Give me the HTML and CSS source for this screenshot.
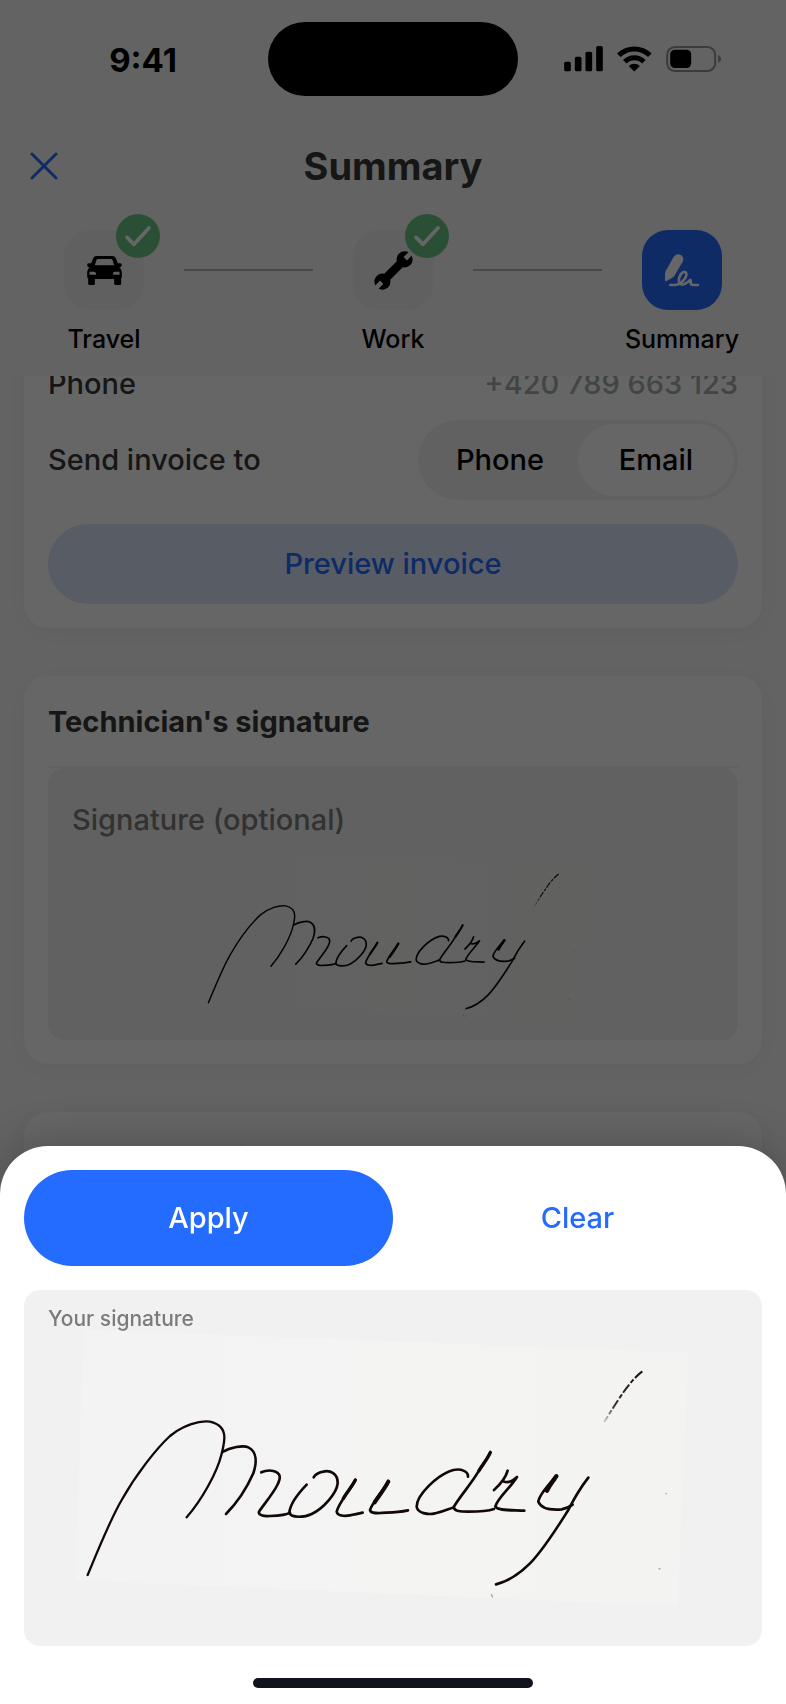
FILE: index.html
```html
<!DOCTYPE html>
<html lang="en">
<head>
<meta charset="utf-8">
<meta name="viewport" content="width=device-width, initial-scale=1">
<title>Summary</title>
<link rel="stylesheet" href="styles.css">
</head>
<body>
<svg class="defs" aria-hidden="true">
  <defs>
    <linearGradient id="paper" x1="0" y1="0" x2="1" y2="0">
      <stop offset="0" stop-color="#f3f3f3"/>
      <stop offset="0.5" stop-color="#f4f4f3"/>
      <stop offset="1" stop-color="#f3f3f1"/>
    </linearGradient>
    <linearGradient id="fade" gradientUnits="userSpaceOnUse" x1="1752" y1="122" x2="1632" y2="277">
      <stop offset="0" stop-color="#1b1210"/>
      <stop offset="0.7" stop-color="#3b3026"/>
      <stop offset="1" stop-color="#d8d4c4"/>
    </linearGradient>
    <symbol id="signature" viewBox="0 0 1920 840">
      <path fill="url(#paper)" d="M72 0 L1000 34 L1885 68 L1853 828 L960 790 L45 750Z"/>
      <g fill="none" stroke="#120907" stroke-width="8" stroke-linecap="round" stroke-linejoin="round">
        <path stroke-width="7" d="M83 735C110 670 150 570 185 510C230 430 290 355 330 318C370 285 420 270 450 275C480 282 494 300 493 325C492 345 488 360 484 375C470 430 425 510 380 562"/>
        <path d="M488 366C510 352 550 345 565 352C592 365 590 400 580 430C560 475 530 520 498 552"/>
        <path d="M604 427C615 422 632 421 640 423C665 430 662 445 652 465C640 490 610 525 597 545C594 555 610 560 630 558C660 557 680 555 690 548"/>
        <path d="M740 464C715 490 690 525 688 548C692 565 735 562 755 552C790 535 830 490 833 460C834 430 810 420 790 425C775 428 765 434 761 442"/>
        <path d="M886 450C870 480 835 520 830 545C832 560 860 560 885 553L908 548"/>
        <path stroke-width="10" d="M886 450C876 470 862 485 850 505"/>
        <path d="M985 453C965 490 935 520 930 540C932 552 955 550 980 548C1010 547 1025 545 1044 541"/>
        <path stroke-width="12" d="M985 455C972 480 955 500 944 517"/>
        <path d="M1224 440C1225 425 1205 415 1180 420C1130 435 1070 495 1070 530C1072 550 1105 555 1125 550C1150 545 1165 537 1178 533"/>
        <path d="M1291 366C1280 390 1262 410 1255 425C1235 460 1195 505 1182 530C1180 545 1205 545 1225 545C1260 545 1285 543 1302 537"/>
        <path stroke-width="10" d="M1291 368C1280 392 1264 408 1257 422"/>
        <path d="M1343 422C1338 440 1330 455 1302 480M1332 455C1350 460 1360 450 1371 441C1350 475 1312 505 1306 530C1312 542 1350 540 1393 542"/>
        <path d="M1490 437C1475 455 1438 490 1435 515C1445 540 1480 540 1505 538C1520 535 1530 530 1538 524"/>
        <path stroke-width="13" d="M1489 439C1478 454 1468 466 1461 482"/>
        <path d="M1585 443C1560 475 1540 510 1525 540C1490 595 1450 660 1410 700C1370 740 1340 755 1308 763"/>
        <path stroke="url(#fade)" stroke-width="6" stroke-linecap="butt" stroke-dasharray="30 6 14 7" d="M1747 124C1710 152 1680 200 1632 277"/>
        <path stroke="#a9a69c" stroke-width="4" d="M1294 794L1298 801M1818 490L1819 491M1797 716L1800 717"/>
      </g>
    </symbol>
    <symbol id="check" viewBox="0 0 132 132">
      <path fill="none" stroke="#fff" stroke-width="11" stroke-linecap="round" stroke-linejoin="round" d="M33 70L54 91L99 42"/>
    </symbol>
  </defs>
</svg>

<div class="screen">
  <header class="header">
    <div class="status">
      <span class="status-time">9:41</span>
      <span class="island"></span>
      <svg class="status-icons" viewBox="0 0 473 78" aria-hidden="true">
        <rect x="0" y="47" width="20" height="29" rx="5"/>
        <rect x="32" y="32" width="20" height="44" rx="5"/>
        <rect x="64" y="17" width="20" height="59" rx="5"/>
        <rect x="96" y="0" width="20" height="76" rx="5"/>
        <g fill="none" stroke="#000" stroke-width="15">
          <path d="M164 28A66 66 0 0 1 257 28"/>
          <path d="M182 47A40 40 0 0 1 239 47"/>
        </g>
        <path d="M194 60A23 23 0 0 1 227 60L213 74Q210 77 208 74Z"/>
        <rect x="309" y="3" width="144" height="72" rx="23" fill="none" stroke="#000" stroke-opacity=".4" stroke-width="6"/>
        <rect x="318" y="11" width="63" height="55" rx="14"/>
        <path fill-opacity=".4" d="M462 27Q471 31 471 39T462 51Z"/>
      </svg>
    </div>
    <div class="title-bar">
      <button class="close" type="button" aria-label="Close">
        <svg viewBox="0 0 28 28" aria-hidden="true"><path d="M2 2L26 26M26 2L2 26"/></svg>
      </button>
      <h1 class="title">Summary</h1>
    </div>
    <ol class="steps">
      <li class="step">
        <span class="tile">
          <svg class="icon-car" viewBox="0 0 104 87" aria-hidden="true">
            <path fill-rule="evenodd" d="M28 0H76Q83 0 86 7L92 22H100Q104 22 104 27Q104 33 99 34H96Q104 39 104 48V62Q104 65 102 67V83Q102 87 98 87H86Q81 87 81 83V69H23V83Q23 87 19 87H7Q3 87 3 83V67Q0 65 0 62V48Q0 39 8 34H5Q0 33 0 27Q0 22 4 22H12L18 7Q21 0 28 0ZM33 9Q29 9 28 12L23 28H81L76 12Q75 9 71 9ZM7 47V56H27Q27 47 20 47ZM97 47V56H77Q77 47 84 47Z"/>
          </svg>
          <svg class="badge" role="img" aria-label="Done"><use href="#check"/></svg>
        </span>
        <span class="step-label">Travel</span>
      </li>
      <li class="step-line" aria-hidden="true"></li>
      <li class="step">
        <span class="tile">
          <svg class="icon-wrench" viewBox="0 0 116 116" aria-hidden="true">
            <mask id="jaws">
              <rect width="116" height="116" fill="#fff"/>
              <path stroke="#000" stroke-width="14" stroke-linejoin="round" d="M-4 120L23 93M120 -4L93 23"/>
            </mask>
            <g mask="url(#jaws)">
              <circle cx="25" cy="91" r="24"/>
              <circle cx="91" cy="25" r="24"/>
              <path stroke="#000" stroke-width="25" d="M32 84L84 32"/>
            </g>
          </svg>
          <svg class="badge" role="img" aria-label="Done"><use href="#check"/></svg>
        </span>
        <span class="step-label">Work</span>
      </li>
      <li class="step-line" aria-hidden="true"></li>
      <li class="step" aria-current="step">
        <span class="tile tile-active">
          <svg class="icon-sign" viewBox="0 0 104 98" aria-hidden="true">
            <path fill="#fff" d="M26 8Q33 -3 45 2Q58 8 53 22L29 63Q25 70 18 73L5 80Q0 82 0 77V59Q0 54 3 49Z"/>
            <path fill="none" stroke="#fff" stroke-width="8" stroke-linecap="round" stroke-linejoin="round" d="M16 92H30Q44 91 56 77Q67 63 62 55Q55 50 47 60Q39 72 42 84Q47 95 60 88Q70 82 75 77Q78 78 76 85Q77 92 84 92H98"/>
          </svg>
        </span>
        <span class="step-label">Summary</span>
      </li>
    </ol>
  </header>

  <main class="content">
    <section class="card card-invoice">
      <div class="row row-phone">
        <span>Phone</span>
        <span class="value">+420 789 663 123</span>
      </div>
      <div class="row">
        <span id="send-to">Send invoice to</span>
        <div class="segmented" role="radiogroup" aria-labelledby="send-to">
          <label class="segment"><input type="radio" name="send" value="phone">Phone</label>
          <label class="segment"><input type="radio" name="send" value="email" checked>Email</label>
        </div>
      </div>
      <button class="preview" type="button">Preview invoice</button>
    </section>

    <section class="card">
      <h2 class="card-title">Technician's signature</h2>
      <div class="sign-field">
        <span class="sign-label">Signature (optional)</span>
        <svg class="sign-small" viewBox="0 0 1920 840" role="img" aria-label="Moudrý"><use href="#signature"/></svg>
      </div>
    </section>

    <section class="card">
      <h2 class="card-title">Customer's signature</h2>
      <div class="sign-field">
        <span class="sign-label">Signature (optional)</span>
      </div>
    </section>
  </main>
</div>

<div class="scrim"></div>

<div class="sheet" role="dialog" aria-label="Your signature">
  <div class="actions">
    <button class="action action-main" type="button">Apply</button>
    <button class="action" type="button">Clear</button>
  </div>
  <div class="pad">
    <span class="pad-label">Your signature</span>
    <svg class="pad-drawing" viewBox="0 0 1920 840" role="img" aria-label="Moudrý"><use href="#signature"/></svg>
  </div>
  <div class="home-bar"></div>
</div>
</body>
</html>
```

FILE: styles.css
```css
* {
  box-sizing: border-box;
}

body {
  margin: 0;
  background: #f8f8f8;
  color: #383838;
  font-family: Inter, "Liberation Sans", sans-serif;
  font-size: 29px;
  font-weight: 500;
  line-height: 40px;
}

button {
  border: 0;
  padding: 0;
  background: none;
  color: #246bff;
  font: inherit;
  cursor: pointer;
}

svg {
  display: block;
}

.defs {
  position: absolute;
  width: 0;
  height: 0;
}

.screen {
  display: flex;
  flex-direction: column;
  height: 100vh;
  overflow: hidden;
}

/* Header */

.header {
  flex: none;
  padding-bottom: 20px;
}

.status {
  display: grid;
  grid-template-columns: 1fr 250px 1fr;
  align-items: center;
  justify-items: center;
  height: 118px;
}

.status-time {
  padding: 2px 0 0 18px;
  color: #000;
  font-size: 33px;
  font-weight: 700;
}

.island {
  width: 100%;
  height: 74px;
  border-radius: 37px;
  background: #000;
}

.status-icons {
  width: 158px;
  height: 26px;
  margin-right: 18px;
}

.title-bar {
  display: grid;
  grid-template-columns: 60px 1fr 60px;
  align-items: center;
  height: 96px;
  padding: 0 14px;
}

.close {
  display: grid;
  place-items: center;
  width: 60px;
  height: 60px;
}

.close svg {
  width: 28px;
  height: 28px;
  fill: none;
  stroke: #246bff;
  stroke-width: 3;
  stroke-linecap: round;
}

.title {
  margin: 0;
  font-size: 38px;
  font-weight: 700;
  text-align: center;
}

.steps {
  display: flex;
  margin: 0;
  padding: 16px 64px 0;
  list-style: none;
}

.step {
  display: flex;
  flex-direction: column;
  align-items: center;
  gap: 12px;
  width: 80px;
}

.tile {
  position: relative;
  display: grid;
  place-items: center;
  width: 80px;
  height: 80px;
  border-radius: 26px;
  background: #f0f0f0;
}

.tile-active {
  background: #246bff;
}

.icon-car {
  width: 35px;
  height: 29px;
}

.icon-wrench {
  width: 39px;
  height: 39px;
}

.icon-sign {
  width: 35px;
  height: 33px;
}

.badge {
  position: absolute;
  top: -16px;
  right: -16px;
  width: 44px;
  height: 44px;
  border-radius: 50%;
  background: #6cc585;
}

.step-label {
  color: #000;
  font-size: 25px;
  line-height: 34px;
  white-space: nowrap;
}

.step-line {
  flex: 1;
  height: 2px;
  margin: 39px 40px 0;
  background: #b6b6b6;
}

/* Scrolled content */

.content {
  display: flex;
  flex: 1;
  flex-direction: column;
  gap: 48px;
  min-height: 0;
  padding: 0 24px;
  overflow: hidden;
}

.card {
  flex: none;
  padding: 24px;
  border-radius: 24px;
  background: #fff;
  box-shadow: 0 4px 24px rgba(0, 0, 0, 0.05);
}

.card-invoice {
  margin-top: -40px;
}

.row {
  display: flex;
  align-items: center;
  justify-content: space-between;
}

.row-phone {
  height: 48px;
  margin-bottom: 12px;
}

.value {
  color: #a4acaa;
}

.segmented {
  display: grid;
  grid-template-columns: 1fr 1fr;
  width: 320px;
  height: 80px;
  padding: 4px;
  border-radius: 40px;
  background: #f2f2f2;
}

.segment {
  display: grid;
  place-items: center;
  border-radius: 36px;
  color: #000;
}

.segment:has(:checked) {
  background: #fff;
}

.segment input {
  position: absolute;
  margin: 0;
  opacity: 0;
}

.preview {
  width: 100%;
  height: 80px;
  margin-top: 24px;
  border-radius: 40px;
  background: #dde6fa;
}

.card-title {
  margin: 0;
  padding-bottom: 22px;
  border-bottom: 2px solid #f2f2f2;
  font-size: 29px;
  font-weight: 700;
  line-height: 44px;
}

.sign-field {
  display: flex;
  flex-direction: column;
  gap: 8px;
  min-height: 272px;
  padding: 32px 24px 15px;
  border-radius: 16px;
  background: #f2f2f2;
}

.sign-label {
  color: #7d7d7d;
}

.sign-small {
  align-self: center;
  width: 404px;
  max-width: 100%;
}

/* Bottom sheet */

.scrim {
  position: fixed;
  inset: 0;
  background: rgba(0, 0, 0, 0.6);
}

.sheet {
  position: fixed;
  right: 0;
  bottom: 0;
  left: 0;
  padding: 24px 24px 16px;
  border-radius: 48px 48px 0 0;
  background: #fff;
  box-shadow: 0 0 48px rgba(0, 0, 0, 0.24);
}

.actions {
  display: grid;
  grid-template-columns: 1fr 1fr;
}

.action {
  height: 96px;
  border-radius: 48px;
}

.action-main {
  background: #246bff;
  color: #fff;
}

.pad {
  margin-top: 24px;
  padding: 18px 0 36px;
  border-radius: 16px;
  background: #f1f1f1;
}

.pad-label {
  display: block;
  padding: 0 24px;
  color: #7b7b7b;
  font-size: 21px;
  line-height: 22px;
}

.pad-drawing {
  width: calc(100% - 98px);
  margin-left: 36px;
}

.home-bar {
  width: 280px;
  height: 10px;
  margin: 32px auto 0;
  border-radius: 5px;
  background: #10141d;
}
```
